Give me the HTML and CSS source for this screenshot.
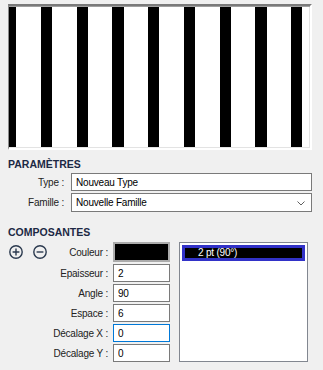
FILE: index.html
```html
<!DOCTYPE html>
<html lang="fr">
<head>
  <meta charset="UTF-8" />
  <title>Motif de hachures</title>
  <link rel="stylesheet" href="styles.css">
</head>
<body>
  <div class="preview"></div>

  <h2 class="section-title">PARAMÈTRES</h2>
  <div class="params">
    <label class="field-label" for="inputType">Type :</label>
    <input class="field" id="inputType" type="text" value="Nouveau Type">
    <label class="field-label">Famille :</label>
    <div class="field combo">
      <span>Nouvelle Famille</span>
      <svg class="chevron" width="8" height="5" viewBox="0 0 8 5"><polyline points="0.5,0.5 4,4 7.5,0.5" fill="none" stroke="#606060" stroke-width="1"/></svg>
    </div>
  </div>

  <h2 class="section-title comp-title">COMPOSANTES</h2>
  <div class="components">
    <div class="color-row">
      <div class="tools">
        <svg class="tool" width="14" height="14" viewBox="0 0 14 14"><circle cx="7" cy="7" r="6.2" fill="none" stroke="#2b3a4f" stroke-width="1.4"/><path d="M7 3.6v6.8M3.6 7h6.8" stroke="#2b3a4f" stroke-width="1.4"/></svg>
        <svg class="tool" width="14" height="14" viewBox="0 0 14 14"><circle cx="7" cy="7" r="6.2" fill="none" stroke="#2b3a4f" stroke-width="1.4"/><path d="M3.6 7h6.8" stroke="#2b3a4f" stroke-width="1.4"/></svg>
      </div>
      <span class="field-label">Couleur :</span>
    </div>
    <div class="swatch"></div>
    <div class="layer-list">
      <div class="layer-item">2 pt (90°)</div>
    </div>

    <label class="field-label" for="inputWidth">Epaisseur :</label>
    <input class="field" id="inputWidth" type="text" value="2">

    <label class="field-label" for="inputAngle">Angle :</label>
    <input class="field" id="inputAngle" type="text" value="90">

    <label class="field-label" for="inputSpace">Espace :</label>
    <input class="field" id="inputSpace" type="text" value="6">

    <label class="field-label" for="inputOffX">Décalage X :</label>
    <input class="field focused" id="inputOffX" type="text" value="0">

    <label class="field-label" for="inputOffY">Décalage Y :</label>
    <input class="field" id="inputOffY" type="text" value="0">
  </div>
</body>
</html>
```

FILE: styles.css
```css
/* Base */
* { box-sizing: border-box; margin: 0; padding: 0; }
body {
  background: #f0f0f0;
  font-family: "Liberation Sans", Arial, sans-serif;
  font-size: 10px;
  letter-spacing: -0.2px;
  color: #1a1a1a;
  width: 323px;
  height: 370px;
  overflow: hidden;
}

/* Hatch preview */
.preview {
  margin: 4px 0 0 8px;
  width: 304px;
  height: 146px;
  border-style: solid;
  border-width: 2px 2px 2px 1px;
  border-color: #7a7a7a #fff #fff #8c8c8c;
  box-shadow: inset 0 1px 0 #a0a0a0, inset -1px -1px 0 #e3e3e3;
  background: repeating-linear-gradient(90deg, #000 0 7.25px, #fff 7.25px 32px, #000 32px 35.75px);
}

/* Section titles */
.section-title {
  margin: 8px 0 3px 8px;
  font-size: 10.5px;
  line-height: 12px;
  font-weight: bold;
  letter-spacing: 0;
  color: #1c2944;
}
.comp-title { margin-top: 14px; margin-bottom: 4px; }

.field-label {
  text-align: right;
  color: #222;
  align-self: center;
  white-space: nowrap;
}

.field {
  height: 18px;
  border: 1px solid #7a7a7a;
  background: #fff;
  font: inherit;
  letter-spacing: inherit;
  color: #000;
  padding: 0 4px;
  outline: none;
  width: 100%;
}
.field.focused { border-color: #0078d7; }

/* Parameters */
.params {
  display: grid;
  grid-template-columns: 56px 1fr;
  column-gap: 7px;
  row-gap: 2px;
  padding: 0 11px 0 8px;
}
.combo {
  display: flex;
  align-items: center;
  justify-content: space-between;
  height: 19px;
  padding-right: 6px;
}
.chevron { display: block; margin-top: 1px; }

/* Components */
.components {
  display: grid;
  grid-template-columns: 101px 57px 134px;
  grid-template-rows: 20px repeat(5, 18px);
  column-gap: 4px;
  row-gap: 2px;
  padding: 0 10px 0 8px;
}
.components .field-label { padding-right: 1px; }
.color-row {
  display: flex;
  align-items: center;
  justify-content: space-between;
}
.tools { display: flex; gap: 10px; padding-left: 1px; }
.tool { display: block; }
.swatch {
  border: 2px solid #ababab;
  background: #000;
}
.layer-list {
  grid-column: 3;
  grid-row: 1 / -1;
  margin-left: 5px;
  border: 1px solid #828790;
  background: #fff;
  padding: 2px;
}
.layer-item {
  height: 16px;
  border: 3px solid #3232c8;
  background: #000;
  color: #fff;
  line-height: 10px;
  padding-left: 13px;
}
```
